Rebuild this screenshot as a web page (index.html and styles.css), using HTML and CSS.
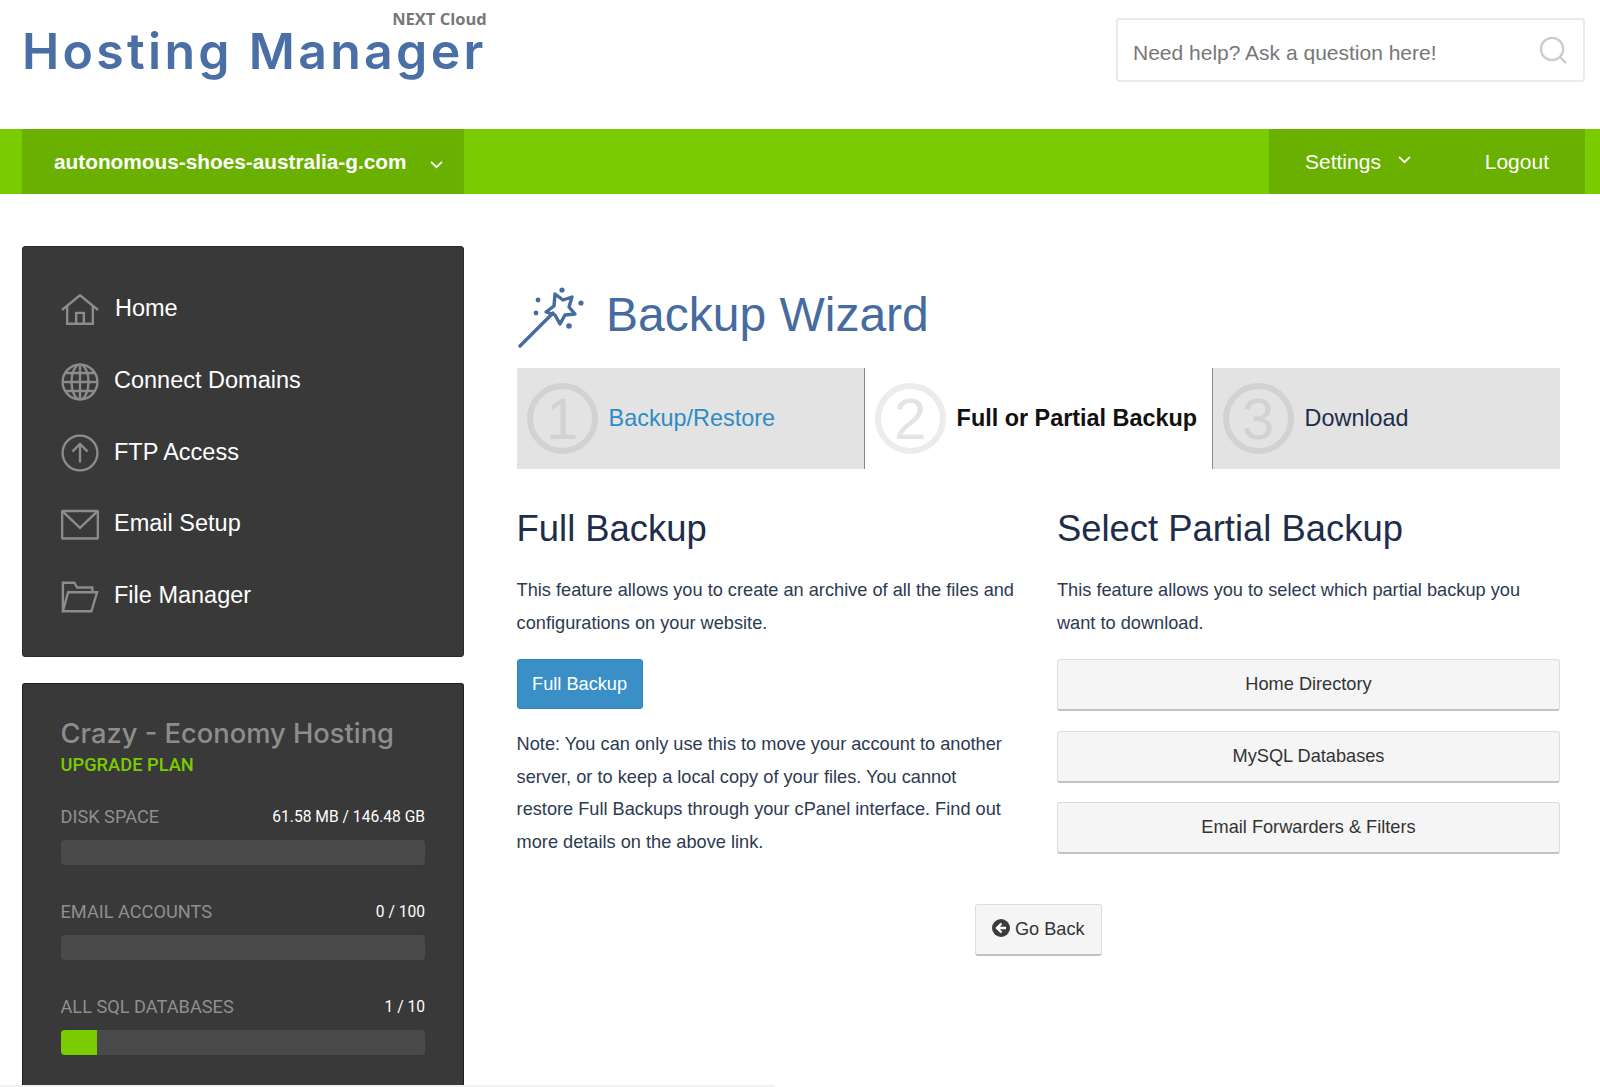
FILE: index.html
```html
<!DOCTYPE html>
<html lang="en">
<head>
<meta charset="utf-8">
<title>Backup Wizard</title>
<link rel="stylesheet" href="styles.css">
</head>
<body>
<header class="top">
  <a class="logo">
    <span class="logo-small">NEXT Cloud</span>
    <span class="logo-main">Hosting Manager</span>
  </a>
  <form class="search">
    <span class="search-text">Need help? Ask a question here!</span>
    <svg class="search-icon" viewBox="0 0 30 30"><circle cx="13.5" cy="13.5" r="11.5"/><path d="M22 22l6 6"/></svg>
  </form>
</header>
<nav class="bar">
  <div class="bar-domain">
    <span>autonomous-shoes-australia-g.com</span>
    <svg class="chev" viewBox="0 0 12 8"><path d="M1 1.5l5 5 5-5"/></svg>
  </div>
  <div class="bar-right">
    <span class="bar-settings">Settings<svg class="chev chev-s" viewBox="0 0 12 8"><path d="M1 1.5l5 5 5-5"/></svg></span>
    <span>Logout</span>
  </div>
</nav>
<div class="page">
  <aside class="side">
    <ul class="menu">
      <li><svg class="mi" viewBox="0 0 40 34"><path d="M1 17L20 1.5 39 17M6.5 13v18.5h27V13M16 31.5V20h8v11.5"/></svg><span class="mi-home">Home</span></li>
      <li><svg class="mi" viewBox="0 0 40 40"><circle cx="20" cy="20" r="18.3"/><ellipse cx="20" cy="20" rx="9" ry="18.3"/><path d="M20 1.7v36.6M1.7 20h36.6M4.5 10.5h31M4.5 29.5h31"/></svg><span>Connect Domains</span></li>
      <li><svg class="mi" viewBox="0 0 40 40"><circle cx="20" cy="20" r="18.3"/><path d="M20 30V11M12 18.5l8-8 8 8"/></svg><span>FTP Access</span></li>
      <li><svg class="mi" viewBox="0 0 40 32"><rect x="1.2" y="1.2" width="37.6" height="29" rx="1"/><path d="M2 2l18 17L38 2"/></svg><span>Email Setup</span></li>
      <li><svg class="mi" viewBox="0 0 40 34"><path d="M2 32V2h12l3 5h16v5M2 32h30l6-20H7.5z"/></svg><span>File Manager</span></li>
    </ul>
    <section class="plan">
      <h3 class="plan-name">Crazy - Economy Hosting</h3>
      <a class="plan-up">UPGRADE PLAN</a>
      <div class="stat">
        <div class="stat-row"><span class="stat-l">DISK SPACE</span><span class="stat-v">61.58 MB / 146.48 GB</span></div>
        <div class="track"></div>
      </div>
      <div class="stat">
        <div class="stat-row"><span class="stat-l">EMAIL ACCOUNTS</span><span class="stat-v">0 / 100</span></div>
        <div class="track"></div>
      </div>
      <div class="stat">
        <div class="stat-row"><span class="stat-l">ALL SQL DATABASES</span><span class="stat-v">1 / 10</span></div>
        <div class="track"><div class="fill" style="width:10%"></div></div>
      </div>
    </section>
  </aside>
  <main class="main">
    <div class="title">
      <svg class="wand" viewBox="0 0 70 70">
        <path class="wand-stick" d="M3 64L36 31"/>
        <path class="wand-star" d="M38 12l8 6 9-3-3 10 6 7-10 1-5 9-5-9-9-3 8-6z"/>
        <circle cx="21" cy="18" r="2.4"/><circle cx="19" cy="31" r="2.4"/><circle cx="45" cy="8" r="2.6"/><circle cx="64" cy="21" r="2.6"/><circle cx="52" cy="44" r="2.8"/>
      </svg>
      <h1>Backup Wizard</h1>
    </div>
    <div class="steps">
      <div class="step step-off"><span class="num">1</span><a class="step-link">Backup/Restore</a></div>
      <div class="step step-on"><span class="num">2</span><strong>Full or Partial Backup</strong></div>
      <div class="step step-off step-last"><span class="num">3</span><span class="step-text">Download</span></div>
    </div>
    <div class="cols">
      <section>
        <h2>Full Backup</h2>
        <p>This feature allows you to create an archive of all the files and configurations on your website.</p>
        <a class="btn-blue">Full Backup</a>
        <p class="note">Note: You can only use this to move your account to another server, or to keep a local copy of your files. You cannot restore Full Backups through your cPanel interface. Find out more details on the above link.</p>
      </section>
      <section>
        <h2>Select Partial Backup</h2>
        <p>This feature allows you to select which partial backup you want to download.</p>
        <div class="btn-list">
          <a class="btn">Home Directory</a>
          <a class="btn">MySQL Databases</a>
          <a class="btn">Email Forwarders &amp; Filters</a>
        </div>
      </section>
    </div>
    <div class="back-wrap">
      <a class="btn btn-back"><svg class="back-icon" viewBox="0 0 18 18"><circle cx="9" cy="9" r="9"/><path d="M9.5 4.5L5 9l4.5 4.5M5.5 9H14"/></svg>Go Back</a>
    </div>
  </main>
</div>
<div class="foot-line"></div>
</body>
</html>
```
FILE: styles.css
```css
* { box-sizing: border-box; }
html, body { margin: 0; padding: 0; }
body {
  height: 1087px;
  overflow: hidden;
  background: #fff;
  font-family: "Liberation Sans", Arial, sans-serif;
  color: #1e2d49;
}
ul { list-style: none; margin: 0; padding: 0; }

.top {
  height: 129px;
  display: flex;
  justify-content: space-between;
  align-items: flex-start;
  padding: 18px 15px 0 22px;
}
.logo { display: flex; flex-direction: column; align-items: flex-end; margin-top: -7px; }
.logo-small {
  font: 700 16.5px/15px "Open Sans", sans-serif;
  color: #777;
}
.logo-main {
  font: 600 50px/50px Inter, sans-serif;
  letter-spacing: 3.3px;
  color: #4a6ea6;
  white-space: nowrap;
}
.search {
  width: 469px;
  height: 64px;
  border: 2px solid #e8eaec;
  border-radius: 3px;
  display: flex;
  align-items: center;
  justify-content: space-between;
  padding: 0 15px;
}
.search-text { font-size: 21px; color: #777; padding-top: 6px; }
.search-icon { width: 29px; height: 29px; fill: none; stroke: #ccc; stroke-width: 2.4; }

.bar {
  height: 65px;
  background: #7acc00;
  padding: 0 15px 0 22px;
  display: flex;
  justify-content: space-between;
  color: #fff;
}
.bar-domain {
  width: 442px;
  background: #69b000;
  display: flex;
  align-items: center;
  padding-left: 32px;
  font-size: 20.8px;
  font-weight: 700;
}
.chev { width: 13px; height: 9px; fill: none; stroke: #fff; stroke-width: 1.6; margin-left: 24px; margin-top: 5px; }
.bar-right {
  width: 316px;
  background: #69b000;
  display: flex;
  align-items: center;
  justify-content: space-between;
  padding: 0 36px;
  font-size: 21px;
}
.bar-settings { display: flex; align-items: center; }
.chev-s { margin-left: 17px; margin-top: -4px; }

.page {
  height: 891px;
  padding: 52px 40px 0 22px;
  display: flex;
  align-items: stretch;
}
.side {
  width: 442px;
  flex: none;
  display: flex;
  flex-direction: column;
  gap: 26px;
}
.menu {
  height: 411px;
  background: #393939;
  border: 1px solid #2a2a2a;
  border-radius: 3px;
  padding: 26px 0 0 38px;
}
.menu li {
  height: 71.7px;
  display: flex;
  align-items: center;
  gap: 15px;
  font-size: 23.5px;
  color: #fff;
}
.mi { width: 38px; height: 38px; flex: none; fill: none; stroke: #8c8c8c; stroke-width: 2.5; margin-top: 2px; }
.mi-home { margin-left: 1px; }

.plan {
  flex: 1;
  background: #393939;
  border: 1px solid #1f1f1f;
  border-bottom: 0;
  border-radius: 3px 3px 0 0;
  padding: 33px 38px 0 37.5px;
}
.plan-name {
  margin: 0;
  font: 500 27.3px/34px Inter, sans-serif;
  color: #8d8d8d;
  white-space: nowrap;
}
.plan-up {
  display: block;
  margin-top: 2px;
  font: 500 18.3px/24px Roboto, sans-serif;
  color: #7acc00;
}
.plan-up + .stat { margin-top: 28px; }
.stat + .stat { margin-top: 35px; }
.stat-row { display: flex; justify-content: space-between; align-items: center; height: 24px; margin-bottom: 11px; }
.stat-l { font: 400 18.2px/24px Roboto, sans-serif; color: #8f8f8f; }
.stat-v { font: 400 15.6px/24px Roboto, sans-serif; color: #fff; }
.track { height: 25px; background: #4a4a4a; border-radius: 4px; }
.fill { height: 100%; background: #7acc00; border-radius: 4px 0 0 4px; }

.main { flex: 1; padding-left: 52.6px; min-width: 0; }
.title { height: 122px; display: flex; align-items: flex-start; padding-top: 41px; gap: 19.4px; }
.wand { width: 70px; height: 70px; flex: none; margin-top: -5px; fill: #466b9f; }
.wand-stick { fill: none; stroke: #466b9f; stroke-width: 3.4; stroke-linecap: round; }
.wand-star { fill: none; stroke: #466b9f; stroke-width: 3.4; stroke-linejoin: round; }
h1 {
  margin: 0;
  font-size: 48px;
  font-weight: 400;
  line-height: 56px;
  color: #466b9f;
}
.steps {
  height: 101px;
  display: grid;
  grid-template-columns: 348px 347px 348px;
}
.step { display: flex; align-items: center; font-size: 23.4px; padding-left: 10px; gap: 11px; white-space: nowrap; }
.step-off { background: #e3e3e3; border-right: 1px solid #8a8a8a; color: #1e2d49; }
.step-last { border-right: 0; border-left: 1px solid #8a8a8a; }
.num {
  width: 71px;
  height: 71px;
  border: 6px solid #d2d2d2;
  border-radius: 50%;
  flex: none;
  display: flex;
  align-items: center;
  justify-content: center;
  font-size: 58px;
  font-weight: 400;
  color: #d2d2d2;
}
.step-on .num { border-color: #ececec; color: #e4e4e4; }
.step-link { color: #2f8bc6; }
.step-on strong { color: #111; }
.step-text { color: #1e2d49; }

.cols {
  display: grid;
  grid-template-columns: 501px 503px;
  column-gap: 39.4px;
  padding-top: 36px;
}
h2 {
  margin: 0;
  font-size: 36.4px;
  font-weight: 400;
  line-height: 48px;
  color: #1e2d49;
}
.cols p {
  margin: 21px 0 0;
  font-size: 18.2px;
  line-height: 32.6px;
  color: #2c3a52;
}
.cols p.note { margin-top: 19px; }
.btn-blue {
  display: inline-flex;
  align-items: center;
  justify-content: center;
  width: 126px;
  height: 50px;
  margin-top: 20px;
  background: #3a8fc7;
  border: 1px solid #2f86bf;
  border-radius: 3px;
  color: #fff;
  font-size: 18.2px;
}
.btn-list { display: flex; flex-direction: column; gap: 19.5px; margin-top: 20px; }
.btn {
  display: flex;
  align-items: center;
  justify-content: center;
  height: 52px;
  background: #f5f5f5;
  border: 1px solid #ddd;
  border-bottom: 2px solid #c2c2c2;
  border-radius: 3px;
  color: #333;
  font-size: 18.2px;
}
.back-wrap { display: flex; justify-content: center; margin-top: 45px; }
.btn-back { width: 127px; gap: 5px; }
.back-icon { width: 18px; height: 18px; margin-top: -3px; }
.back-icon circle { fill: #3c3c3c; }
.back-icon path { fill: none; stroke: #fff; stroke-width: 2.4; }

.foot-line { height: 2px; width: 775px; background: #f2f2f2; }
```
